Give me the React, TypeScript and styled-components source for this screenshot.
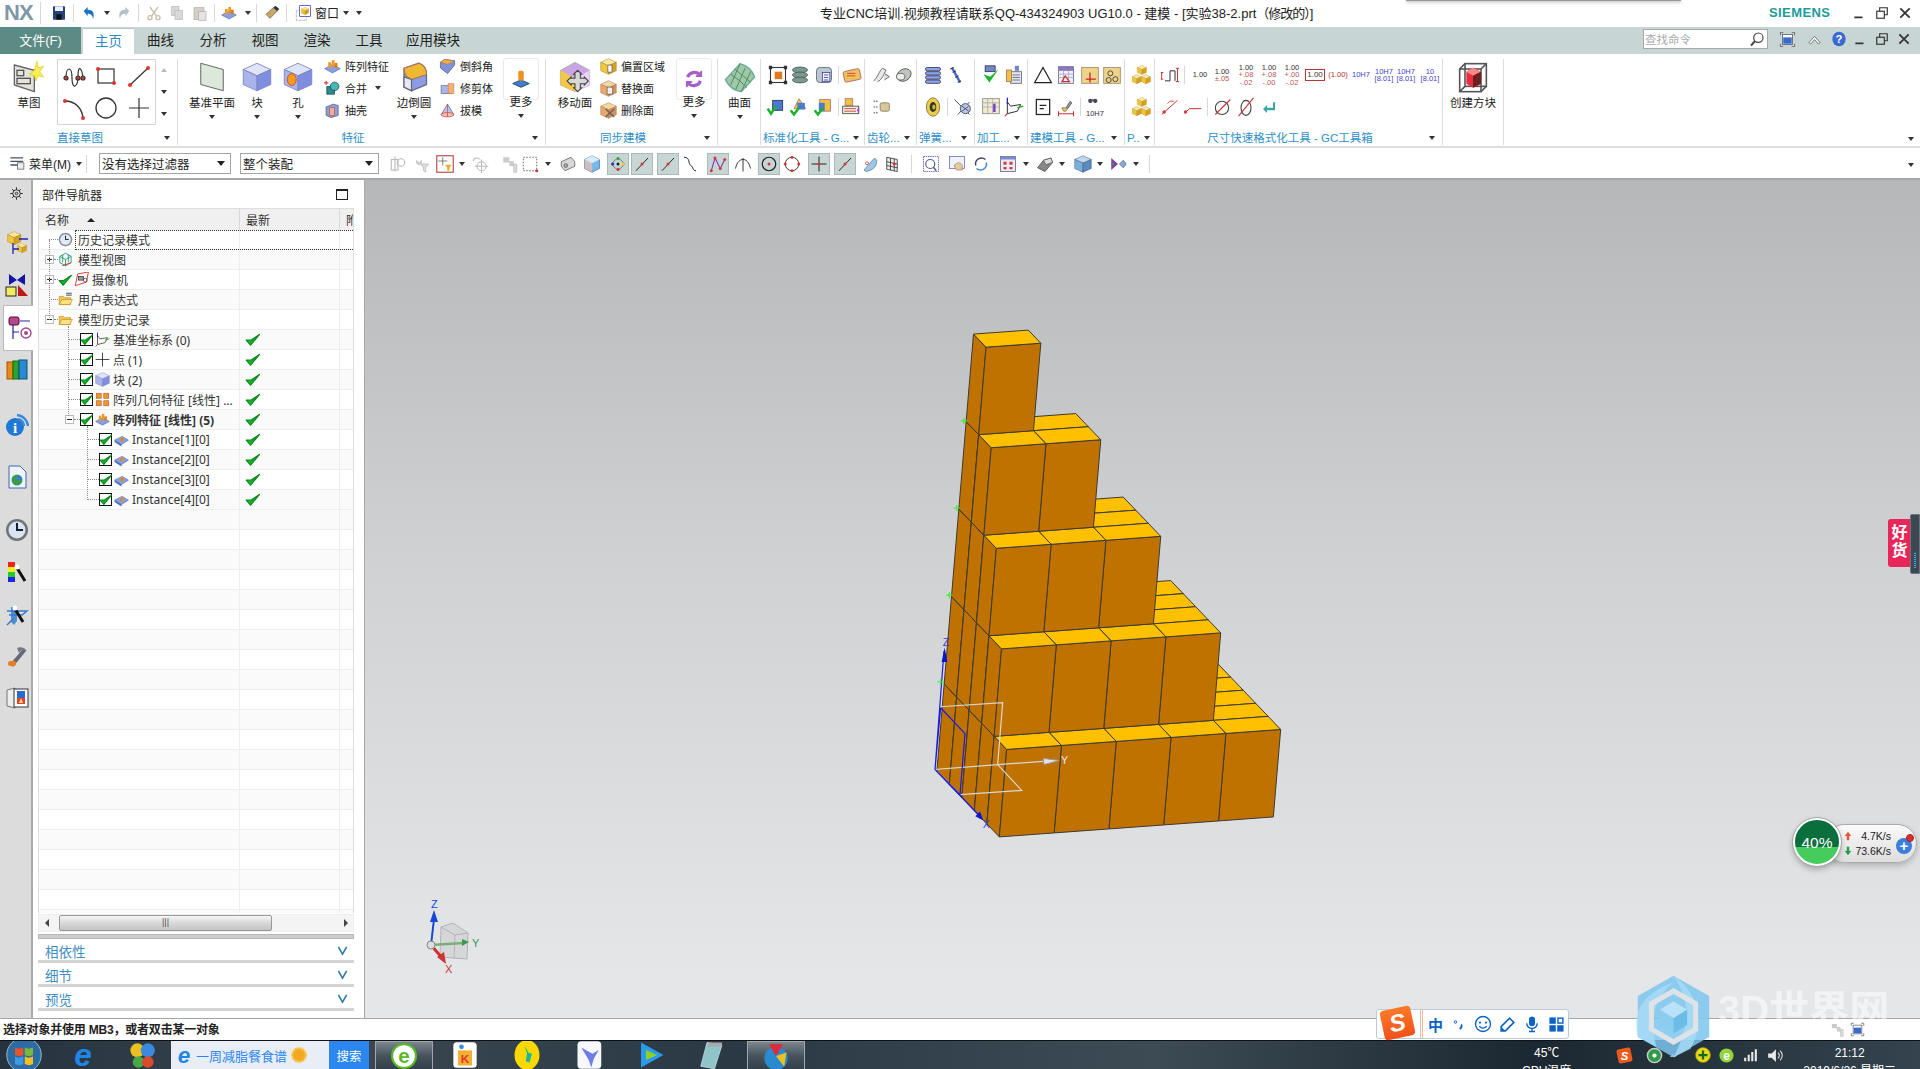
import React from "react";
import styled, { createGlobalStyle } from "styled-components";

const Global = createGlobalStyle`
  html, body { margin: 0; padding: 0; background: #fff; overflow: hidden; }
  * { box-sizing: border-box; }
  body { font-family: "Noto Sans CJK SC", "Liberation Sans", sans-serif; }
`;
const UI = `"Liberation Sans", "Noto Sans CJK SC", sans-serif`;

const Page = styled.div`position: relative; width: 1920px; height: 1069px; display: flex; flex-direction: column; overflow: hidden; font-family: ${UI}; color: #222;`;
const TitleBar = styled.div`height: 27px; display: flex; align-items: center; position: relative; background: #fff; flex: none; padding-bottom: 2px;`;
const Nx = styled.div`width: 40px; padding-left: 4px; font: bold 22px "Liberation Sans", sans-serif; color: #7f97a6; letter-spacing: -1px;`;
const VSep = styled.div<{ $h?: number; $ml?: number; $mr?: number; $c?: string }>`width: 1px; height: ${p => p.$h ?? 22}px; background: ${p => p.$c ?? "#d8d8d8"}; margin-left: ${p => p.$ml ?? 0}px; margin-right: ${p => p.$mr ?? 0}px; flex: none;`;
const Quick = styled.div`display: flex; align-items: center; flex: none; width: 320px; font-size: 12px;`;
const TitleText = styled.div`margin-left: 460px; font-size: 13px; white-space: nowrap; width: 490px; flex: none;`;
const Tight = styled.span`letter-spacing: -1px;`;
const Siemens = styled.div`margin-left: 459px; font: bold 13px "Liberation Sans", sans-serif; letter-spacing: .4px; color: #1b9c98; flex: none;`;
const WinCtl = styled.div<{ $ml: number }>`display: flex; gap: 9px; margin-left: ${p => p.$ml}px; align-items: center; flex: none;`;
const Shadow = styled.div`position: absolute; left: 1406px; top: 0; width: 275px; height: 1px; background: #999; box-shadow: 0 1px 3px #777;`;

const TabBar = styled.div`height: 27px; background: #c7d6d4; display: flex; align-items: stretch; flex: none; position: relative;`;
const FileTab = styled.div`width: 81px; background: #5c8a84; color: #fff; font-size: 13px; display: flex; align-items: center; justify-content: center; padding-bottom: 3px;`;
const Tab = styled.div<{ $active?: boolean; $w: number }>`width: ${p => p.$w}px; font-size: 13.5px; display: flex; align-items: center; justify-content: center; padding-bottom: 3px;
  ${p => p.$active ? "background:#fff;color:#2a8bc4;margin:1px 0 0 2px;border-top:1px solid #b8c8c6;" : "color:#222;"}`;
const TabRight = styled.div`margin-left: auto; display: flex; align-items: center; padding: 0 6px 3px 0;`;
const SearchBox = styled.div`width: 125px; height: 20px; background: #fff; border: 1px solid #a9a9a9; display: flex; align-items: center; justify-content: space-between; color: #aaa; font-size: 11.5px; padding: 0 2px 0 1px;`;

const Ribbon = styled.div`height: 94px; flex: none; display: flex; padding-top: 5px; border-bottom: 2px solid #dedede; background: #fff; position: relative;`;
const Group = styled.div<{ $w: number }>`width: ${p => p.$w}px; height: 86px; border-right: 1px solid #dcdcdc; display: flex; flex-direction: column; flex: none;`;
const GroupBody = styled.div`height: 72px; display: flex;`;
const GroupLabel = styled.div`height: 14px; display: flex; align-items: center; padding-right: 2px; color: #2f8fc6; font-size: 11.5px; line-height: 14px;`;
const GroupName = styled.span<{ $left?: boolean }>`flex: 1; white-space: nowrap; text-align: ${p => p.$left ? "left" : "center"}; padding-left: ${p => p.$left ? "2px" : 0};`;
const Caret = styled.i<{ $ml?: number; $c?: string }>`display: block; width: 0; height: 0; border: 3px solid transparent; border-top: 4px solid ${p => p.$c ?? "#333"}; border-bottom: 0; margin-left: ${p => p.$ml ?? 0}px; flex: none;`;
const GroupCaret = styled(Caret)`margin: 0 5px 0 4px;`;
const Big = styled.div<{ $w: number; $ml?: number; $box?: boolean }>`width: ${p => p.$w}px; margin-left: ${p => p.$ml ?? 0}px; display: flex; flex-direction: column; align-items: center; font-size: 11.5px; color: #222; flex: none;`;
const BigIcon = styled.div<{ $box?: boolean }>`height: 36px; width: 100%; display: flex; align-items: center; justify-content: center; ${p => p.$box ? "border:1px solid #eaeaea;border-radius:3px;height:42px;margin-bottom:-6px;margin-top:-1px;" : ""}`;
const BigLabel = styled.div`height: 16px; line-height: 16px; white-space: nowrap;`;
const BigCaret = styled.div`height: 12px; display: flex; align-items: center; justify-content: center;`;
const SmallCol = styled.div<{ $w: number; $ml: number }>`width: ${p => p.$w}px; margin: -4px 0 0 ${p => p.$ml}px; flex: none;`;
const SmallRow = styled.div`height: 22px; display: flex; align-items: center; gap: 4px; font-size: 11px; white-space: nowrap;`;
const Gallery = styled.div`width: 99px; height: 66px; margin-left: 5px; border: 1px solid #d4d4d4; display: grid; grid-template-columns: repeat(3, 1fr); grid-template-rows: repeat(2, 1fr); flex: none; place-items: center;`;
const GalScroll = styled.div`margin-left: 4px; height: 66px; display: flex; flex-direction: column; align-items: center; justify-content: space-around; width: 8px;`;
const Up = styled.i`display: block; width: 0; height: 0; border: 3px solid transparent; border-bottom: 4px solid #bbb; border-top: 0;`;
const IconRows = styled.div`display: flex; flex-direction: column;`;
const Strip = styled.div<{ $h: number }>`display: flex; align-items: center; height: ${p => p.$h}px;`;
const Cell = styled.div<{ $w: number; $ml: number; $active?: boolean }>`width: ${p => p.$w}px; margin-left: ${p => p.$ml}px; height: 22px; display: flex; align-items: center; justify-content: center; flex: none;
  ${p => p.$active ? "background:#c7d6d4;border:1px solid #a8bab8;" : ""}`;
const Mini = styled.div<{ $c?: string; $box?: boolean }>`font: 7.5px/7.5px "Liberation Sans", sans-serif; color: ${p => p.$c ?? "#333"}; text-align: center; white-space: pre; ${p => p.$box ? "border:1px solid #b33;padding:1px;font-size:8px;" : ""}`;

const Toolbar = styled.div`height: 32px; flex: none; display: flex; align-items: center; border-bottom: 2px solid #a6a8a9; background: #fff; position: relative; padding-top: 1px;`;
const MenuBtn = styled.div`display: flex; align-items: center; gap: 3px; width: 86px; padding-left: 9px; font-size: 12px; flex: none;`;
const Combo = styled.div<{ $w: number; $ml: number }>`width: ${p => p.$w}px; margin-left: ${p => p.$ml}px; height: 21px; border: 1px solid #a5a5a5; display: flex; align-items: center; justify-content: space-between; padding: 0 5px 0 2px; font-size: 12.5px; flex: none;`;
const ComboCaret = styled.i`display: block; width: 0; height: 0; border: 4px solid transparent; border-top: 5px solid #222; border-bottom: 0;`;
const EndCaret = styled(Caret)`position: absolute; right: 6px; top: 15px;`;
const RibbonEnd = styled(Caret)`position: absolute; right: 6px; top: 83px;`;

const Main = styled.div`flex: 1; display: flex; min-height: 0; position: relative;`;
const Rail = styled.div`width: 33px; background: #dcdcdc; border-right: 2px solid #a9a9a9; display: flex; flex-direction: column; flex: none; align-items: center;`;
const RailItem = styled.div<{ $mt: number; $active?: boolean }>`margin-top: ${p => p.$mt}px; display: flex; align-items: center; justify-content: center; flex: none; width: 100%; padding-left: 2px;
  ${p => p.$active ? "height:46px;background:#fff;margin-left:3px;margin-right:-2px;width:30px;border:1px solid #bbb;border-right:0;" : "height:26px;"}`;
const Panel = styled.div`width: 331px; background: #fff; display: flex; flex-direction: column; padding: 0 9px 7px 5px; flex: none;`;
const PanelHead = styled.div`height: 28px; display: flex; align-items: center; justify-content: space-between; font-size: 12px; padding: 0 7px 0 4px; flex: none;`;
const RestoreBox = styled.i`display: block; width: 12px; height: 11px; border: 1px solid #222; border-top-width: 2px;`;
const TreeBox = styled.div`flex: 1; border: 1px solid #dedede; border-bottom: 0; position: relative; overflow: hidden; min-height: 0; width: 316px;`;
const TreeHead = styled.div`height: 21px; display: flex; background: #f0f0f0; font-size: 12px; color: #333;`;
const HeadCell = styled.div<{ $w: number }>`width: ${p => p.$w}px; border-right: 1px solid #d8d8d8; padding-left: 6px; display: flex; align-items: center; gap: 18px; overflow: hidden; white-space: nowrap; flex: none;`;
const SortUp = styled.i`display: block; width: 0; height: 0; border: 4px solid transparent; border-bottom: 4px solid #222; border-top: 0;`;
const Row = styled.div<{ $alt: boolean }>`height: 20px; display: flex; background: ${p => p.$alt ? "#fafafa" : "#fff"}; border-bottom: 1px solid #eeeeee;`;
const NameCell = styled.div<{ $bold?: boolean }>`width: 201px; border-right: 1px solid #eeeeee; display: flex; align-items: center; font: ${p => p.$bold ? 700 : 400} 12px "Noto Sans", "Noto Sans CJK SC", sans-serif; white-space: nowrap; overflow: hidden; flex: none; color: #333;`;
const NewCell = styled.div`width: 100px; border-right: 1px solid #eeeeee; padding-left: 5px; display: flex; align-items: center; flex: none;`;
const Guide = styled.div<{ $w: number }>`width: ${p => p.$w}px; flex: none; height: 100%;`;
const Stub = styled.i<{ $w: number }>`display: block; width: ${p => p.$w}px; border-top: 1px dotted #8a8a8a; flex: none;`;
const Expander = styled.i<{ $ml: number; $open?: boolean }>`display: block; position: relative; width: 9px; height: 9px; border: 1px solid #bbb; background: #fff; margin-left: ${p => p.$ml}px; flex: none;
  &::before { content: ""; position: absolute; left: 1px; top: 3px; width: 5px; height: 1px; background: #222; }
  ${p => p.$open ? "" : `&::after { content: ""; position: absolute; left: 3px; top: 1px; width: 1px; height: 5px; background: #222; }`}`;
const VGuide = styled.i<{ $l: number; $t: number; $h: number }>`position: absolute; left: ${p => p.$l}px; top: ${p => p.$t}px; height: ${p => p.$h}px; border-left: 1px dotted #8a8a8a;`;
const Focus = styled.i`position: absolute; left: 36px; top: 21px; width: 280px; height: 20px; border: 1px dotted #333; border-right: 0;`;
const ChkBox = styled.span`display: flex; width: 13px; height: 13px; border: 1px solid #111; background: #fff; align-items: center; justify-content: center; flex: none;`;
const RowIcon = styled.span<{ $ml: number }>`margin-left: ${p => p.$ml}px; flex: none;`;
const RowText = styled.span<{ $ml: number }>`margin-left: ${p => p.$ml}px;`;
const HScroll = styled.div`height: 18px; display: flex; align-items: center; background: #f4f4f4; margin: 1px 0 2px; border: 1px solid #eee; width: 316px; flex: none; justify-content: space-between; padding: 0 5px 0 6px; position: relative;`;
const Thumb = styled.div`position: absolute; left: 20px; top: 0; width: 213px; height: 16px; background: linear-gradient(#f6f6f6, #d8d8d8 50%, #c4c4c4); border: 1px solid #999; border-radius: 2px; text-align: center; font: 9px/12px "Liberation Sans", sans-serif; color: #555;`;
const ArrowL = styled.i`display: block; width: 0; height: 0; border: 4px solid transparent; border-right: 4px solid #444; border-left: 0;`;
const ArrowR = styled.i`display: block; width: 0; height: 0; border: 4px solid transparent; border-left: 4px solid #444; border-right: 0;`;
const Splitter = styled.div`height: 5px; width: 316px; background: #cdcdcd; border: 1px solid #b8b8b8; flex: none;`;
const Section = styled.div`height: 24px; width: 316px; border-bottom: 3px solid #d4d4d4; color: #3f8dbf; font-size: 13.5px; display: flex; align-items: center; justify-content: space-between; padding: 2px 6px 0 7px; flex: none;`;

const Viewport = styled.div`flex: 1; position: relative; background: linear-gradient(#b6b7b9 0%, #d0d1d3 45%, #e5e6e8 95%); border-left: 1px solid #a8a8a8; overflow: hidden;`;
const ModelSvg = styled.svg`position: absolute; left: 535px; top: 130px; width: 420px; height: 540px;`;
const TriadSvg = styled.svg`position: absolute; left: 50px; top: 719px; width: 80px; height: 80px;`;
const Status = styled.div`height: 22px; flex: none; background: #fff; border-top: 1px solid #a6a6a6; display: flex; align-items: center; padding: 0 0 2px 3px; font-size: 12px; font-weight: 700; color: #222; letter-spacing: -0.2px;`;
const TaskBar = styled.div`height: 29px; flex: none; background: linear-gradient(90deg, #26333e 0%, #3b4852 18%, #2a3944 38%, #3d4b55 60%, #1c2831 80%, #34434e 100%); border-top: 1px solid #0c1218; display: flex; align-items: center; position: relative; overflow: hidden; color: #fff;`;
const TaskIcon = styled.div<{ $ml: number; $active?: boolean }>`margin-left: ${p => p.$ml}px; height: 29px; flex: none; display: flex; align-items: center; justify-content: center; ${p => p.$active ? "width:58px;background:linear-gradient(#7a858d,#47535c 50%,#333f48);border:1px solid #a0a8ad;border-bottom:0;" : "width:30px;"}`;
const WebSearch = styled.div`margin-left: 14px; width: 198px; height: 29px; background: #e9eef4; display: flex; align-items: center; color: #2f86f0; font-size: 13px; flex: none; padding-left: 3px; gap: 2px;`;
const SearchBtn = styled.div`margin-left: auto; width: 40px; height: 29px; background: #2b87ee; color: #fff; font-size: 12.5px; display: flex; align-items: center; justify-content: center;`;
const TrayInfo = styled.div<{ $ml: number }>`margin-left: ${p => p.$ml}px; flex: none; font-size: 12px; text-align: center; line-height: 18px; padding-top: 3px; height: 29px; white-space: nowrap;`;
const TrayIcon = styled.div<{ $ml: number }>`margin-left: ${p => p.$ml}px; flex: none; display: flex; align-items: center;`;

const Ime = styled.div`position: absolute; left: 1376px; top: 1009px; width: 193px; height: 30px; background: #fff; border: 1px solid #b9cada; border-radius: 3px; display: flex; align-items: center; color: #0b63c5;`;
const ImeLogo = styled.div`width: 31px; height: 30px; margin: -2px 0 0 5px; transform: rotate(-12deg); background: linear-gradient(#ff7a28, #f0511a); border-radius: 4px; color: #fff; font: italic bold 24px/30px "Liberation Sans", sans-serif; text-align: center; flex: none;`;
const ImeBar = styled.i`display: block; width: 3px; height: 28px; border-left: 1px solid #f3b9a0; border-right: 1px solid #f3b9a0; margin: 0 5px 0 7px; flex: none;`;
const ImeCn = styled.span`font-size: 15px; font-weight: 700; width: 18px; flex: none;`;
const ImeCell = styled.span`width: 24.5px; display: flex; justify-content: center; flex: none;`;
const Watermark = styled.div`position: absolute; left: 1631px; top: 974px; width: 280px; height: 85px; display: flex; align-items: center; pointer-events: none;`;
const MarkText = styled.div`font: bold 40px "Liberation Sans", "Noto Sans CJK SC", sans-serif; color: rgba(255,255,255,.55); margin: -20px 0 0 2px; white-space: nowrap; letter-spacing: 0;`;
const TinyIcons = styled.div`position: absolute; left: 1830px; top: 1022px; display: flex; gap: 5px; align-items: center;`;
const Tag = styled.div`position: absolute; left: 1888px; top: 519px; width: 23px; height: 48px; background: #e8265a; border-radius: 3px 0 0 3px; color: #fff; font-weight: 700; font-size: 16px; line-height: 18px; text-align: center; padding-top: 5px;`;
const SideBar = styled.div`position: absolute; left: 1910px; top: 514px; width: 10px; height: 60px; background: #3e4852; border-radius: 2px 0 0 2px; border: 1px solid #6b747c;`;
const SideLed = styled.i`display: block; width: 2px; height: 16px; margin: 38px 0 0 3px; background: repeating-linear-gradient(#38b6f0 0 1px, transparent 1px 2px);`;
const Pill = styled.div`position: absolute; left: 1825px; top: 824px; width: 92px; height: 39px; border-radius: 20px; background: linear-gradient(#fafafa, #dedede); border: 1px solid #aaa; box-shadow: 0 3px 6px rgba(0,0,0,.2); font: 10.5px/15px "Liberation Sans", sans-serif; color: #222; display: flex; flex-direction: column; justify-content: center; padding-left: 17px;`;
const SpeedRow = styled.div`display: flex; align-items: center; justify-content: space-between; width: 48px;`;
const Ball = styled.div`position: absolute; left: 1793px; top: 818px; width: 48px; height: 48px; border-radius: 50%; border: 2px solid #fff; outline: 1px solid #aaa; box-shadow: 0 3px 6px rgba(0,0,0,.3); background: linear-gradient(#0a6f3c 0 62%, #45cc5c 62% 100%); color: #fff; font: 15.5px/46px "Liberation Sans", sans-serif; text-align: center;`;
const Plus = styled.div`position: absolute; left: 1896px; top: 838px; width: 16px; height: 16px; border-radius: 50%; background: #3b7fdc; color: #fff; font: bold 15px/15px "Liberation Sans", sans-serif; text-align: center;`;
const RedDot = styled.i`position: absolute; left: 1906px; top: 834px; width: 8px; height: 8px; border-radius: 50%; background: #d8312c; border: 1px solid #a22;`;

/* ---- drawings ---- */
type SvgP = { s?: number; children: React.ReactNode; vb?: string };
const IcSvg = styled.svg`display: block; flex: none;`;
const Ic = ({ s = 20, children, vb = "0 0 24 24" }: SvgP) => <IcSvg width={s} height={s} viewBox={vb}>{children}</IcSvg>;
const Cube = ({ t, l, r, e = "#7c86c0" }: { t: string; l: string; r: string; e?: string }) => (
  <g stroke={e} strokeWidth=".7"><polygon points="12,1 23,6 12,11 1,6" fill={t} /><polygon points="1,6 12,11 12,23 1,18" fill={l} /><polygon points="12,11 23,6 23,18 12,23" fill={r} /></g>
);
const BlueCube = () => <Cube t="#dfe4f6" l="#a9b4ea" r="#7e8ddd" />;
const Yellow = () => <Cube t="#f8e9a0" l="#f0c73c" r="#d8a020" e="#a88020" />;
const Dot = ({ x, y }: { x: number; y: number }) => <circle cx={x} cy={y} r="2" fill="#d33" />;
const Check = ({ s = 15 }: { s?: number }) => <Ic s={s}><path d="M2 13 L9 21 L23 4 L10 13 Z" fill="#19b32c" stroke="#0a8a1c" strokeWidth="2" strokeLinejoin="round" /></Ic>;
const Pattern = () => <g><polygon points="1,15 12,9 23,15 12,21" fill="#8a9ee0" stroke="#5a6cb0" /><rect x="6" y="6" width="4" height="8" fill="#f09a20" /><rect x="11" y="3" width="4" height="8" fill="#f09a20" /><rect x="15" y="7" width="4" height="7" fill="#e07d10" /></g>;
const Folder = () => <g><path d="M2 7h7l2 2h9v11H2z" fill="#f4c74e" stroke="#b98a18" /><path d="M2 20l4-8h17l-4 8z" fill="#fde083" stroke="#b98a18" /></g>;

const icons: Record<string, React.ReactNode> = {
  sketch: <g><polygon points="1,3 16,7 16,23 1,18" fill="#e4e4dc" stroke="#666" /><rect x="3" y="7" width="5" height="4" fill="none" stroke="#555" /><rect x="3" y="13" width="10" height="4" fill="none" stroke="#555" /><path d="M18 0l1 5 4-1-3 4 3 4-4-1-2 4-1-4-4-1 4-3z" fill="#f7ee50" stroke="#d8c820" strokeWidth=".5" /></g>,
  spline: <g fill="none" stroke="#333" strokeWidth="1.2"><path d="M4 14 C4 2 10 2 10 14 S16 24 16 12 S20 4 21 14" /><Dot x={4} y={14} /><Dot x={21} y={14} /><Dot x={16} y={14} /></g>,
  rect: <g><rect x="4" y="5" width="16" height="14" fill="none" stroke="#333" strokeWidth="1.2" /><Dot x={4} y={5} /><Dot x={20} y={19} /></g>,
  line: <g><path d="M3 21L21 4" stroke="#333" strokeWidth="1.2" /><Dot x={3} y={21} /><Dot x={21} y={4} /></g>,
  arc: <g><path d="M3 5C13 5 20 12 21 22" stroke="#333" fill="none" strokeWidth="1.4" /><Dot x={3} y={5} /><Dot x={21} y={22} /></g>,
  circle: <circle cx="12" cy="12" r="10" fill="none" stroke="#333" strokeWidth="1.3" />,
  plus: <path d="M12 2v20M2 12h20" stroke="#333" strokeWidth="1.2" />,
  datum: <polygon points="3,1 21,6 21,23 3,18" fill="#dbe8da" stroke="#666" strokeWidth=".8" />,
  block: <BlueCube />,
  hole: <g><BlueCube /><ellipse cx="7" cy="14" rx="3.6" ry="4.8" fill="#f09a20" stroke="#c33" strokeWidth=".6" /></g>,
  pattern: <Pattern />,
  unite: <g><rect x="4" y="9" width="11" height="11" fill="#2a8a8a" stroke="#145" /><circle cx="15" cy="9" r="6" fill="#4ab6b0" stroke="#145" /><path d="M3 1v6M0 4h6" stroke="#d22" strokeWidth="1.4" /></g>,
  shell: <g><polygon points="3,7 13,3 20,5 20,19 10,22 3,19" fill="#8c9ee0" stroke="#556" /><rect x="8" y="8" width="7" height="11" fill="#f0b090" stroke="#a55" /></g>,
  blend: <g><path d="M4 5 L16 1 Q22 3 22 10 L22 18 L10 23 L4 20Z" fill="#8b9be6" stroke="#667" /><path d="M4 5 L16 1 Q22 3 22 10 L10 14 Q4 12 4 5" fill="#f0b830" stroke="#a76" /><path d="M4 12 L4 20 L10 23 L10 14 Z" fill="#e8e8f4" stroke="#667" /></g>,
  chamfer: <g><polygon points="2,6 8,2 22,4 22,10 12,22 2,14" fill="#7f90dc" stroke="#556" /><polygon points="2,6 8,2 22,4 12,9" fill="#f0b040" stroke="#a76" /></g>,
  trim: <g><rect x="3" y="8" width="16" height="11" fill="#a9b6ec" stroke="#667" /><rect x="13" y="5" width="8" height="14" fill="#f2b468" stroke="#c66" strokeDasharray="2 1" /></g>,
  draft: <g><polygon points="12,3 21,18 3,18" fill="#b9c4ee" stroke="#557" /><ellipse cx="12" cy="18" rx="9" ry="3" fill="#f5c0b0" stroke="#c44" /><path d="M12 3v18" stroke="#c44" /></g>,
  more1: <g><polygon points="3,17 12,13 21,17 12,21" fill="#3f7fd0" stroke="#246" /><rect x="9" y="3" width="6" height="11" rx="2" fill="#f09020" /></g>,
  move: <g><polygon points="12,1 23,7 23,18 12,23 1,18 1,7" fill="#c9a4e6" stroke="#8a6" strokeWidth=".4" /><polygon points="1,7 12,13 12,23 1,18" fill="#f2c84a" /><polygon points="12,13 23,7 23,18 12,23" fill="#e8d0f6" /><path d="M14 7l3 3-1 0v3h3v-1l3 3-3 3v-1h-3v3h1l-3 3-3-3h1v-3H9v1l-3-3 3-3v1h3v-3h-1z" fill="#d8d8d8" stroke="#444" strokeWidth=".8" /></g>,
  offset: <g><Yellow /><path d="M11 10h6v10h-6z" fill="#fff" stroke="#555" /></g>,
  replace: <g><Cube t="#f5d8a0" l="#e8a868" r="#d89050" e="#a76" /><rect x="10" y="10" width="8" height="10" fill="#eee" stroke="#555" /></g>,
  del: <g><Cube t="#f5d8a0" l="#e8a868" r="#d89050" e="#a76" /><path d="M8 10l12 11M20 10L8 21" stroke="#666" strokeWidth="2" /></g>,
  sync: <g fill="none" stroke="#a65fc8" strokeWidth="3.5"><path d="M5 10a8 8 0 0 1 13-3" /><path d="M19 14a8 8 0 0 1-13 3" /><path d="M20 3v6h-6M4 21v-6h6" strokeWidth="1.6" fill="#a65fc8" /></g>,
  surface: <g><path d="M1 14 L12 2 Q20 4 23 12 L13 23 Q5 22 1 14Z" fill="#9ec8a6" stroke="#6a9" /><path d="M5 10Q12 14 17 20M8 6Q14 11 20 16M12 2L5 18M16 5L9 21M20 8L13 23" stroke="#4f8a60" strokeWidth=".7" fill="none" /></g>,
  csys: <g fill="none" stroke="#333"><path d="M4 6v14l12-3 4-8-12 2z" strokeWidth="1.2" /><path d="M4 20L1 23" stroke="#c33" strokeWidth="1.5" /><path d="M4 8V1" stroke="#22a" strokeWidth="1.5" /><path d="M16 13l7-2" stroke="#2a2" strokeWidth="1.5" /></g>,
  std1: <g><rect x="3" y="3" width="18" height="18" fill="none" stroke="#333" strokeWidth="1.3" /><rect x="8" y="8" width="9" height="9" fill="#e07820" /><path d="M1 1h4v4H1zM19 1h4v4h-4zM1 19h4v4H1zM19 19h4v4h-4z" fill="#333" /></g>,
  std2: <g fill="#7a9a8a" stroke="#456"><ellipse cx="12" cy="6" rx="9" ry="3.5" /><ellipse cx="12" cy="12" rx="9" ry="3.5" /><ellipse cx="12" cy="18" rx="9" ry="3.5" /></g>,
  std3: <g><rect x="3" y="3" width="18" height="18" rx="4" fill="#bbc8cc" stroke="#567" /><rect x="10" y="9" width="9" height="11" fill="#e8f0f8" stroke="#44a" /><path d="M12 12h5M12 15h5M12 18h5" stroke="#448" /></g>,
  std4: <g><rect x="2" y="6" width="20" height="13" rx="2" fill="#f0c060" stroke="#a66" transform="rotate(-12 12 12)" /><path d="M6 10h10M6 13h10" stroke="#c33" /></g>,
  ok1: <g><rect x="8" y="4" width="12" height="12" fill="#4a7ad0" stroke="#235" /><path d="M2 14l4 6 6-9" stroke="#19b32c" strokeWidth="3" fill="none" /></g>,
  ok2: <g><polygon points="6,14 12,2 20,14" fill="#f0c040" stroke="#a76" /><rect x="10" y="7" width="9" height="8" fill="#4a7ad0" /><path d="M2 16l4 5 6-8" stroke="#19b32c" strokeWidth="3" fill="none" /></g>,
  ok3: <g><rect x="8" y="3" width="13" height="14" fill="#f0c040" stroke="#a76" /><rect x="7" y="7" width="7" height="10" fill="#4a7ad0" /><path d="M2 16l4 5 6-8" stroke="#19b32c" strokeWidth="3" fill="none" /></g>,
  tbl: <g><rect x="5" y="2" width="9" height="8" fill="#f0c040" stroke="#a76" /><rect x="2" y="11" width="19" height="9" fill="#f4f0e0" stroke="#444" /><path d="M4 14h14M4 17h14" stroke="#b33" /><path d="M22 11v9l-3-4z" fill="#a040c0" /></g>,
  gear1: <g fill="none" stroke="#555"><path d="M3 19C8 16 10 6 14 4 L18 6 C16 10 13 18 8 20" fill="#e8e8e8" /><path d="M16 10l6 4-6 4" fill="#ddd" /></g>,
  gear2: <g><ellipse cx="12" cy="12" rx="9" ry="7" fill="#c0c4c0" stroke="#555" transform="rotate(-30 12 12)" /><ellipse cx="8" cy="14" rx="5" ry="4" fill="#eee" stroke="#555" /></g>,
  gear3: <g><path d="M3 5h6M3 12h6M3 19h6" stroke="#333" strokeDasharray="2 1" /><rect x="11" y="7" width="11" height="10" rx="2" fill="#d8c8a0" stroke="#875" /></g>,
  spring1: <g fill="#8fa4e6" stroke="#335"><rect x="3" y="3" width="18" height="4" rx="2" /><rect x="3" y="8" width="18" height="4" rx="2" /><rect x="3" y="13" width="18" height="4" rx="2" /><rect x="3" y="18" width="18" height="4" rx="2" /></g>,
  spring2: <g stroke="#4a66c8" strokeWidth="3" fill="none"><path d="M7 3L17 21" /><path d="M5 5L9 3M8 9l4-2M11 15l4-2M14 21l4-2" stroke="#223" strokeWidth="1" /></g>,
  spring3: <g><ellipse cx="12" cy="12" rx="8" ry="11" fill="#e8d040" stroke="#765" /><ellipse cx="12" cy="12" rx="4" ry="6" fill="#333" /><ellipse cx="13" cy="12" rx="2" ry="3" fill="#d8b030" /></g>,
  spring4: <g stroke="#556" fill="none" strokeWidth="1.2"><path d="M3 3l18 18M21 6L7 21" /><ellipse cx="16" cy="14" rx="6" ry="6" fill="#b8c8e8" /><path d="M12 11l8 6M12 17l8-6" /></g>,
  mach1: <g><rect x="5" y="1" width="12" height="7" fill="#7088c8" stroke="#335" /><path d="M3 11l7 10L21 5l-10 9z" fill="#19b32c" /></g>,
  mach2: <g><rect x="8" y="8" width="13" height="14" fill="#dde4ec" stroke="#667" /><path d="M10 12h9M10 15h9M10 18h9" stroke="#667" /><rect x="3" y="6" width="6" height="14" fill="#f0c040" stroke="#a76" /><rect x="13" y="1" width="5" height="6" fill="#7088c8" /></g>,
  mach3: <g><rect x="2" y="2" width="20" height="18" fill="#f0ecd0" stroke="#888" /><path d="M2 7h20M2 12h20M8 2v18M14 2v18" stroke="#aaa" /><path d="M16 8v10" stroke="#74c" strokeWidth="3" /></g>,
  tri: <path d="M12 3L22 21H2Z" fill="none" stroke="#222" strokeWidth="1.5" />,
  calc: <g><rect x="3" y="2" width="18" height="20" fill="#eef" stroke="#668" /><rect x="3" y="2" width="18" height="5" fill="#8878c0" /><path d="M3 11h18M3 15h18M9 7v15M15 7v15" stroke="#aab" /><path d="M11 13l5 7h-9z" fill="none" stroke="#c33" strokeWidth="1.5" /></g>,
  fold1: <g><rect x="2" y="3" width="20" height="19" fill="#ecd48a" stroke="#a86" /><path d="M7 17h12M12 9v12" stroke="#c22" strokeWidth="1.6" /></g>,
  fold2: <g><rect x="2" y="3" width="20" height="19" fill="#ecd48a" stroke="#a86" /><circle cx="10" cy="10" r="3" fill="none" stroke="#333" /><circle cx="16" cy="17" r="3" fill="none" stroke="#333" /><circle cx="8" cy="18" r="3" fill="none" stroke="#333" /></g>,
  note: <g fill="none" stroke="#222" strokeWidth="1.5"><rect x="4" y="3" width="16" height="18" /><path d="M8 10h8M8 14h5" /></g>,
  brush: <g><path d="M3 20h18M3 17v6M21 17v6" stroke="#c33" strokeWidth="1.3" /><path d="M12 13l5-8 2 2-5 7z" fill="#999" stroke="#555" /><path d="M7 13h7l-2 4H9z" fill="#e8c860" stroke="#875" /></g>,
  bino: <g><circle cx="8" cy="7" r="4" fill="#445" /><circle cx="17" cy="7" r="4" fill="#445" /><rect x="10" y="4" width="5" height="4" fill="#667" /></g>,
  boxes: <g><g transform="translate(7 0) scale(.5)"><Yellow /></g><g transform="translate(1 11) scale(.5)"><Yellow /></g><g transform="translate(12 11) scale(.5)"><Yellow /></g></g>,
  dim1: <g fill="none" stroke="#c33" strokeWidth="1.2"><path d="M2 9v8M1 9h3M1 17h3M21 4v16M19 4h4M19 20h4" /><path d="M6 19h6V7h6v12" stroke="#333" /></g>,
  rz: <g><path d="M2 21L21 4" stroke="#c33" strokeWidth="1.2" /><Dot x={5} y={18} /><path d="M9 8l3-3h5" stroke="#c33" fill="none" /></g>,
  rz2: <g><path d="M2 19l6-5h14" stroke="#c33" fill="none" strokeWidth="1.2" /><Dot x={3} y={18} /></g>,
  dia1: <g fill="none" stroke="#444" strokeWidth="1.3"><circle cx="12" cy="13" r="8" /><path d="M4 21L22 3" stroke="#c33" /></g>,
  dia2: <g fill="none" stroke="#444" strokeWidth="1.3"><ellipse cx="12" cy="13" rx="6" ry="9" /><path d="M3 23L21 1" stroke="#c33" /></g>,
  back: <path d="M18 5v8H9V9l-6 6 6 6v-4h12V5z" fill="#3aa6a8" transform="scale(.8) translate(3 3)" />,
  newblock: <g><rect x="6" y="2" width="16" height="17" fill="none" stroke="#555" strokeWidth="1.2" /><rect x="2" y="6" width="16" height="17" fill="none" stroke="#555" strokeWidth="1.2" /><path d="M2 6l4-4M18 6l4-4M18 23l4-4M2 23l4-4" stroke="#555" strokeWidth="1.2" /><polygon points="12,5 18,8 18,17 12,20 7,17 7,8" fill="#e62e3e" /><polygon points="12,5 18,8 12,11 7,8" fill="#f88" /><polygon points="12,11 18,8 18,17 12,20" fill="#6e2020" /></g>,
  fmenu: <g><path d="M2 4h18M2 9h18M2 14h12" stroke="#456" strokeWidth="2" /><rect x="12" y="11" width="9" height="9" fill="#eee" stroke="#555" /></g>,
  f1: <g fill="none" stroke="#bbb" strokeWidth="1.5"><rect x="3" y="6" width="9" height="14" /><circle cx="16" cy="10" r="5" /><path d="M8 2v20" /></g>,
  f2: <g><path d="M4 6l4 4 4-4v5l-4 3-4-3z" fill="#ccc" /><path d="M10 12h11l-4 5v6l-3-2v-4z" fill="#ddd" stroke="#bbb" /></g>,
  f3: <g><rect x="1" y="1" width="22" height="22" fill="#fff" stroke="#b44" strokeWidth="1.5" /><path d="M9 3v11M3 8h12" stroke="#555" /><path d="M12 13h9l-3 4v4h-3v-4z" fill="#e8b030" /></g>,
  f4: <g fill="none" stroke="#bbb" strokeWidth="1.5"><circle cx="14" cy="15" r="6" /><path d="M14 6v18M5 15h18M3 8c1-5 7-5 9-2" /></g>,
  f5: <g><path d="M3 3h8v7H3zM11 8h6v7h-6z" fill="#ccc" /><path d="M17 12h4v11h-4z" fill="#ddd" stroke="#bbb" /></g>,
  f6: <g><rect x="3" y="3" width="18" height="18" fill="none" stroke="#333" strokeDasharray="2 2" /><circle cx="21" cy="21" r="2" fill="#d33" /></g>,
  f7: <g><polygon points="3,9 16,3 21,9 21,15 8,21 3,15" fill="#d8d8d8" stroke="#555" /><circle cx="9" cy="14" r="2.5" fill="#aaa" stroke="#555" /></g>,
  f8: <g><polygon points="12,1 22,6 22,18 12,23 2,18 2,6" fill="#7ab8e8" stroke="#57a" /><polygon points="12,1 22,6 12,11 2,6" fill="#d8ecf8" /><polygon points="2,6 12,11 12,23 2,18" fill="#f0c0b0" opacity=".7" /></g>,
  sn1: <g><path d="M12 3l9 9-9 9-9-9z" fill="none" stroke="#456" /><circle cx="12" cy="5" r="2" fill="#3a3" /><circle cx="19" cy="12" r="2" fill="#fc0" /><circle cx="12" cy="19" r="2" fill="#d33" /><circle cx="5" cy="12" r="2" fill="#33a" /><circle cx="12" cy="12" r="2" fill="#222" /></g>,
  sn2: <g><path d="M4 21L20 4" stroke="#222" strokeWidth="1.3" /><Dot x={12} y={12} /></g>,
  sn3: <path d="M4 3c9 0 5 9 9 11s2 7 7 7" fill="none" stroke="#222" strokeWidth="1.3" />,
  sn4: <g><path d="M3 21L8 4l7 14 6-12" fill="none" stroke="#7a3ab0" strokeWidth="1.4" /><Dot x={8} y={4} /><Dot x={3} y={21} /><Dot x={15} y={18} /><Dot x={21} y={6} /></g>,
  sn5: <path d="M12 4v18M2 18C4 9 8 6 12 6s8 3 10 12" fill="none" stroke="#333" strokeWidth="1.3" />,
  sn6: <g><circle cx="12" cy="12" r="9" fill="none" stroke="#222" strokeWidth="1.6" /><Dot x={12} y={12} /></g>,
  sn7: <g><circle cx="12" cy="12" r="9" fill="none" stroke="#333" strokeWidth="1.3" /><Dot x={3} y={12} /><Dot x={21} y={12} /><Dot x={12} y={3} /><Dot x={12} y={21} /></g>,
  sn8: <g><path d="M12 2v20M2 12h20" stroke="#111" strokeWidth="1.2" /><Dot x={12} y={12} /></g>,
  sn9: <g><path d="M4 20L18 4l3 3c0 8-4 13-14 15z" fill="#9cc8e8" stroke="#678" /><circle cx="8" cy="11" r="2" fill="#fff" stroke="#d33" /></g>,
  sn10: <g><path d="M5 3l14 3v16L5 19z" fill="#eee" stroke="#222" /><path d="M5 9l14 3M5 14l14 3M10 4v16M15 5v16" stroke="#222" /><Dot x={15} y={12} /></g>,
  v1: <g><rect x="2" y="2" width="20" height="20" fill="#fff" stroke="#44b" strokeDasharray="2 1" /><circle cx="11" cy="12" r="6" fill="none" stroke="#567" strokeWidth="1.6" /><path d="M15 16l4 5" stroke="#567" strokeWidth="2" /></g>,
  v2: <g><rect x="2" y="2" width="20" height="16" fill="#eef2fa" stroke="#66a" /><path d="M12 11c2-2 6 0 7 3v6h-8l-3-6z" fill="#e8c8a0" stroke="#a86" /></g>,
  v3: <g fill="none" stroke="#446" strokeWidth="2"><path d="M5 14a8 8 0 0 1 13-8" /><path d="M19 10a8 8 0 0 1-13 8" stroke="#48c" /></g>,
  v4: <g><rect x="2" y="2" width="20" height="20" fill="#e8ecf8" stroke="#557" /><rect x="2" y="2" width="20" height="4" fill="#7d8ad0" /><rect x="6" y="9" width="4" height="4" fill="#d33" /><rect x="14" y="9" width="4" height="4" fill="#d33" /><rect x="6" y="16" width="4" height="3" fill="#d33" /><rect x="14" y="16" width="4" height="3" fill="#d33" /></g>,
  v5: <g><polygon points="2,17 10,7 20,4 22,10 12,22" fill="#888" stroke="#444" /><polygon points="10,7 20,4 22,10 13,13" fill="#ddd" stroke="#555" /></g>,
  v6: <Cube t="#bcd8f0" l="#7ab0dc" r="#5a8cc0" e="#457" />,
  v7: <g><path d="M3 4l9 8-9 8z" fill="#8a3ab0" /><path d="M3 12h4" stroke="#2a2" strokeWidth="3" /><path d="M14 12l5-5 4 5-4 5z" fill="#8aa8d8" stroke="#568" /></g>,
  clock: <g><circle cx="12" cy="12" r="11" fill="#8a8f96" /><circle cx="12" cy="12" r="8.5" fill="#dfeaf6" /><path d="M12 6v6h5" stroke="#222" strokeWidth="1.6" fill="none" /></g>,
  mview: <g fill="none" stroke="#1c9a6a" strokeWidth="1.4"><polygon points="12,2 21,7 21,17 12,22 3,17 3,7" /><path d="M3 7l9 5 9-5M12 12v10M7.5 4.5v12M16.5 4.5v12" /><path d="M7 22l14-5" stroke="#d33" strokeWidth="1.6" /></g>,
  camera: <g><path d="M2 22l4-19 17-3-3 16z" fill="#fff" stroke="#d33" strokeWidth="1.5" /><rect x="7" y="7" width="8" height="6" fill="#999" stroke="#222" /><circle cx="18" cy="13" r="3" fill="none" stroke="#222" /></g>,
  exprF: <g><Folder /><path d="M13 2h9M13 5h9" stroke="#335" strokeWidth="1.4" /></g>,
  folder: <Folder />,
  point: <path d="M12 1v22M1 12h22" stroke="#222" strokeWidth="1.3" />,
  geo: <g fill="#ee9a1a" stroke="#a55"><rect x="2" y="2" width="8" height="8" /><rect x="14" y="2" width="8" height="8" /><rect x="2" y="14" width="8" height="8" /><rect x="14" y="14" width="8" height="8" /></g>,
  inst: <g><polygon points="1,13 13,7 23,13 12,20" fill="#86a4e0" stroke="#4a6ab0" /><polygon points="1,13 12,20 12,23 1,16" fill="#4a6ab0" /><rect x="10" y="9" width="5" height="6" fill="#f08020" /></g>,
  gearI: <g fill="none" stroke="#333" strokeWidth="1.6"><circle cx="12" cy="12" r="6" /><circle cx="12" cy="12" r="2" /><path d="M12 2v4M12 18v4M2 12h4M18 12h4M5 5l3 3M16 16l3 3M19 5l-3 3M8 16l-3 3" /></g>,
  r1: <g><g transform="translate(2 0) scale(.6)"><Yellow /></g><g transform="translate(12 12) scale(.42)"><Yellow /></g><path d="M8 12v11M8 18h6M14 8h9" stroke="#22a" strokeWidth="1.3" /></g>,
  r2: <g><path d="M4 1l8 6 8-6v11l-8-5-8 5z" fill="#1414a8" /><rect x="1" y="14" width="10" height="9" fill="#f4ec60" stroke="#222" /><path d="M13 23V12l10 11z" fill="#c31414" /></g>,
  r3: <g><rect x="1" y="1" width="10" height="8" rx="2" fill="#b04a90" stroke="#602" /><path d="M5 9v14M5 16h6M12 5h10" stroke="#22a" strokeWidth="1.2" /><circle cx="18" cy="17" r="5" fill="#fff" stroke="#a04a90" strokeWidth="1.4" /><circle cx="18" cy="17" r="2" fill="#a04a90" /></g>,
  r4: <g><rect x="2" y="5" width="6" height="17" fill="#e88a1a" stroke="#a50" /><rect x="8" y="4" width="6" height="18" fill="#30a030" stroke="#070" /><rect x="14" y="3" width="8" height="19" fill="#2a8ad0" stroke="#057" /></g>,
  r5: <g><circle cx="10" cy="14" r="9" fill="#1e78d4" /><text x="10" y="20" fontSize="15" fontWeight="700" fill="#fff" textAnchor="middle" fontFamily="Liberation Serif">i</text><path d="M12 2a12 12 0 0 1 11 11M13 6a8 8 0 0 1 6 7" stroke="#3a8adc" strokeWidth="2.4" fill="none" /></g>,
  r6: <g><path d="M4 1h11l6 6v16H4z" fill="#eef4fa" stroke="#3a68b0" /><circle cx="12" cy="15" r="5.5" fill="#3a9a50" /><path d="M12 10a5 5 0 0 1 5 5h-5z" fill="#3a7ad0" /></g>,
  r7: <g><circle cx="12" cy="12" r="11" fill="#707478" /><circle cx="12" cy="12" r="8.5" fill="#d8e4f2" /><path d="M12 5v7h6" stroke="#123" strokeWidth="2" fill="none" /></g>,
  r8: <g><rect x="3" y="2" width="7" height="5" fill="#e22" /><rect x="3" y="7" width="7" height="5" fill="#ee2" /><rect x="3" y="12" width="7" height="5" fill="#2c2" /><rect x="3" y="17" width="7" height="5" fill="#22e" /><path d="M12 8l8 13" stroke="#111" strokeWidth="3" /><circle cx="12" cy="7" r="2.5" fill="#fff" /></g>,
  r9: <g><path d="M6 4v15l3 3 3-4V4z" fill="#4a90d0" /><path d="M2 8h20l-5 4H4M2 22l6-6" stroke="#3a78c8" strokeWidth="1.5" fill="none" /><path d="M10 6l8 13" stroke="#111" strokeWidth="3" /><circle cx="10" cy="5" r="2.5" fill="#fff" /></g>,
  r10: <g><path d="M5 19L18 4l3 2L8 22z" fill="#667" /><path d="M12 3c4-2 8 0 10 3l-5-1-3 3z" fill="#778" /><rect x="3" y="16" width="8" height="5" rx="2" fill="#e88020" /></g>,
  r11: <g><path d="M2 4l8-2v20l-8-2z" fill="#eee" stroke="#777" /><rect x="9" y="3" width="14" height="18" fill="#fff" stroke="#333" /><rect x="12" y="5" width="8" height="7" fill="#2a6ad0" /><rect x="12" y="12" width="8" height="6" fill="#e84020" /><path d="M14 17h4l-2-5z" fill="#ffe0a0" /></g>,
  save: <g><rect x="3" y="2" width="18" height="20" rx="1" fill="#24437c" /><rect x="6" y="2" width="12" height="7" fill="#eef" /><rect x="8" y="14" width="8" height="8" fill="#111" /></g>,
  undo: <path d="M4 9l6-6v4c8 0 11 5 8 14-1-6-3-8-8-8v4z" fill="#1f72c8" />,
  redo: <path d="M20 9l-6-6v4C6 7 3 12 6 21c1-6 3-8 8-8v4z" fill="#b4c2ce" />,
  cut: <g stroke="#c8c0a8" strokeWidth="2" fill="none"><path d="M6 3l10 14M18 3L8 17" /><circle cx="6" cy="19" r="3" /><circle cx="18" cy="19" r="3" /></g>,
  copy: <g fill="#d8d8d8" stroke="#b8b8b8"><rect x="4" y="2" width="11" height="14" /><rect x="9" y="8" width="11" height="14" /></g>,
  paste: <g fill="#d4d0c4" stroke="#aaa"><rect x="3" y="4" width="15" height="18" /><rect x="10" y="10" width="11" height="13" fill="#e4e4e4" /></g>,
  pen: <g><path d="M3 14l11-10 6 5L9 20z" fill="#c8a860" stroke="#554" /><path d="M14 4l6 5 3-3-6-5z" fill="#334" /></g>,
  win: <g><rect x="2" y="8" width="15" height="15" fill="#fff" stroke="#667" strokeDasharray="1 1" /><rect x="7" y="1" width="16" height="16" fill="#fff" stroke="#22c" /><g transform="translate(9 3) scale(.5)"><Cube t="#fbe69a" l="#f0c040" r="#d89a20" e="#a80" /></g></g>,
  lens: <g fill="none" stroke="#444" strokeWidth="1.8"><circle cx="14" cy="10" r="7" /><path d="M9 15l-6 7" strokeWidth="3" /></g>,
  frame: <g><path d="M2 6V2h4M18 2h4v4M22 18v4h-4M6 22H2v-4" fill="none" stroke="#777" strokeWidth="1.5" /><rect x="5" y="5" width="14" height="14" fill="#fff" stroke="#446" /><rect x="6" y="9" width="12" height="9" fill="#3a6ac8" /></g>,
  chev: <path d="M3 17l9-10 9 10-3 2-6-7-6 7z" fill="#fff" stroke="#333" />,
  help: <g><ellipse cx="12" cy="12" rx="10" ry="11" fill="#3a6ad0" /><text x="12" y="18" fontSize="17" fontWeight="700" fill="#fff" textAnchor="middle" fontFamily="Liberation Sans">?</text></g>,
  min: <rect x="4" y="18" width="14" height="3" fill="#333" />,
  rest: <g fill="none" stroke="#333" strokeWidth="2"><rect x="3" y="9" width="13" height="12" /><path d="M8 9V3h13v12h-5" /></g>,
  close: <path d="M4 4l16 16M20 4L4 20" stroke="#333" strokeWidth="3" />,
  chevD: <path d="M3 4l9 16 9-16" fill="none" stroke="#3478a8" strokeWidth="3.5" />,
};
const G = ({ n, s = 20 }: { n: string; s?: number }) => <Ic s={s}>{icons[n]}</Ic>;

const Line = ({ xs, from, w = 22, size = 20 }: { xs: [string | React.ReactNode, number, boolean?][]; from: number; w?: number; size?: number }) => {
  let end = from;
  return <>{xs.map(([n, c, a], i) => {
    const isCaret = n === "^"; const isSep = n === "|";
    const cw = isCaret ? 10 : isSep ? 1 : w;
    const ml = c - cw / 2 - end; end = c + cw / 2;
    return <Cell key={i} $w={cw} $ml={Math.round(ml)} $active={a}>
      {isCaret ? <Caret /> : isSep ? <VSep $h={18} /> : typeof n === "string" ? <G n={n} s={size} /> : n}
    </Cell>;
  })}</>;
};

const BigTool = ({ n, label, w, ml, s = 30, caret = true, box }: { n: string; label: string; w: number; ml?: number; s?: number; caret?: boolean; box?: boolean }) => (
  <Big $w={w} $ml={ml}><BigIcon $box={box}><G n={n} s={s} /></BigIcon><BigLabel>{label}</BigLabel>{caret && <BigCaret><Caret /></BigCaret>}</Big>
);
const Small = ({ n, t, c }: { n: string; t: string; c?: boolean }) => <SmallRow><G n={n} s={17} /><span>{t}</span>{c && <Caret $ml={4} />}</SmallRow>;
const Lbl = ({ t, left }: { t: string; left?: boolean }) => <GroupLabel><GroupName $left={left}>{t}</GroupName><GroupCaret /></GroupLabel>;

type TreeRow = { t: string; bold?: boolean; ok?: boolean; pad: number; exp?: boolean | "open"; chk?: boolean; tick?: boolean; icon: string; stub: number; gap: number; iml?: number };
const rows: TreeRow[] = [
  { t: "历史记录模式", pad: 10, stub: 9, icon: "clock", gap: 5 },
  { t: "模型视图", pad: 6, exp: true, stub: 4, icon: "mview", gap: 5 },
  { t: "摄像机", pad: 6, exp: true, stub: 4, tick: true, icon: "camera", gap: 3, iml: 2 },
  { t: "用户表达式", pad: 10, stub: 9, icon: "exprF", gap: 5 },
  { t: "模型历史记录", pad: 6, exp: "open", stub: 4, icon: "folder", gap: 5 },
  { t: "基准坐标系 (0)", ok: true, chk: true, pad: 29, stub: 12, icon: "csys", gap: 3, iml: 2 },
  { t: "点 (1)", ok: true, chk: true, pad: 29, stub: 12, icon: "point", gap: 3, iml: 2 },
  { t: "块 (2)", ok: true, chk: true, pad: 29, stub: 12, icon: "block", gap: 3, iml: 2 },
  { t: "阵列几何特征 [线性] ...", ok: true, chk: true, pad: 29, stub: 12, icon: "geo", gap: 3, iml: 2 },
  { t: "阵列特征 [线性] (5)", bold: true, ok: true, chk: true, pad: 26, exp: "open", stub: 6, icon: "pattern", gap: 3, iml: 2 },
  { t: "Instance[1][0]", ok: true, chk: true, pad: 48, stub: 12, icon: "inst", gap: 3, iml: 2 },
  { t: "Instance[2][0]", ok: true, chk: true, pad: 48, stub: 12, icon: "inst", gap: 3, iml: 2 },
  { t: "Instance[3][0]", ok: true, chk: true, pad: 48, stub: 12, icon: "inst", gap: 3, iml: 2 },
  { t: "Instance[4][0]", ok: true, chk: true, pad: 48, stub: 12, icon: "inst", gap: 3, iml: 2 },
];
const blanks = Array.from({ length: 21 }, (_, i) => i);

const railCenters: [string, number, boolean?][] = [["gearI", 193], ["r1", 243], ["r2", 285], ["r3", 328, true], ["r4", 369], ["r5", 425], ["r6", 477], ["r7", 530], ["r8", 572], ["r9", 615], ["r10", 657], ["r11", 698]];

/* the stepped solid: cube rows seen from front-left */
const U = [164.4, -11.6], D = [-37.5, -38], V = [22, -254], O = [298, 1530];
const P = (i: number, j: number, k: number) => `${O[0] + i * U[0] + j * D[0] + k * V[0]},${O[1] + i * U[1] + j * D[1] + k * V[1]}`;
const faces: { p: string; f: string; key: string }[] = [];
for (let k = 0; k < 5; k++) for (let j = 4; j >= k; j--) for (let i = 4 - k; i >= 0; i--) {
  faces.push({ key: `l${i}${j}${k}`, f: "#bf7200", p: [P(i, j, k), P(i, j + 1, k), P(i, j + 1, k + 1), P(i, j, k + 1)].join(" ") });
  faces.push({ key: `f${i}${j}${k}`, f: "#bf7200", p: [P(i, j, k), P(i + 1, j, k), P(i + 1, j, k + 1), P(i, j, k + 1)].join(" ") });
  faces.push({ key: `t${i}${j}${k}`, f: "#ffc000", p: [P(i, j, k + 1), P(i + 1, j, k + 1), P(i + 1, j + 1, k + 1), P(i, j + 1, k + 1)].join(" ") });
}
const thin = { vectorEffect: "non-scaling-stroke" as const };

const Model = () => (
  <ModelSvg viewBox="0 0 1260 1568" preserveAspectRatio="none">
    {faces.map(x => <polygon key={x.key} points={x.p} fill={x.f} stroke="#3d3a34" strokeWidth="1" {...thin} />)}
    <g fill="none" stroke="#d8d8d8" strokeWidth="1.2">
      <polyline points="120,1152 308,1140 293,1320 365,1395 180,1407 105,1334 293,1320" {...thin} />
      <path d="M293 1320L440 1310" {...thin} />
    </g>
    <polygon points="430,1302 478,1308 432,1320" fill="#e4e4e4" stroke="#999" {...thin} />
    <text x="483" y="1318" fontSize="32" fill="#e8e8e8" fontFamily="Liberation Sans">Y</text>
    <g fill="none" stroke="#1a1ae0" strokeWidth="1.2">
      <path d="M122 1155L105 1334L240 1470M122 1155L195 1230L180 1407L105 1334M105 1334L132 990" {...thin} />
    </g>
    <polygon points="134,980 142,1022 125,1022" fill="#0a14c8" />
    <polygon points="250,1482 226,1470 240,1456" fill="#0a14c8" />
    <text x="128" y="975" fontSize="32" fill="#3a3ae0" fontFamily="Liberation Sans">Z</text>
    <text x="248" y="1505" fontSize="32" fill="#3a3ae0" fontFamily="Liberation Sans">X</text>
    <g stroke="#3cf03c" strokeWidth="1.2">
      {[[192, 322], [170, 575], [148, 828], [122, 1080]].map(([x, y]) => <path key={x} d={`M${x - 9} ${y}h18M${x} ${y - 9}v18`} {...thin} />)}
    </g>
  </ModelSvg>
);

const Triad = () => (
  <TriadSvg viewBox="0 0 80 80">
    <g fill="rgba(190,190,190,.35)" stroke="#b4b4b4"><polygon points="26,28 38,24 53,34 52,60 25,58" /><path d="M26 28l14 8 13-2M40 36l-1 24" fill="none" /></g>
    <path d="M16 46L19 20" stroke="#1448d8" strokeWidth="2" /><polygon points="19,11 23,23 15,23" fill="#1448d8" />
    <path d="M16 46L48 44" stroke="#79b079" strokeWidth="2.4" /><polygon points="54,43 47,40 47,47" fill="#3a9a50" />
    <path d="M16 46L28 60" stroke="#c33" strokeWidth="3" /><polygon points="31,65 22,58 29,53" fill="#c33" />
    <circle cx="16" cy="46" r="4" fill="#ddd" stroke="#888" />
    <text x="16" y="9" fontSize="11" fill="#1448d8" fontFamily="Liberation Sans">Z</text>
    <text x="57" y="48" fontSize="11" fill="#3a9a50" fontFamily="Liberation Sans">Y</text>
    <text x="30" y="74" fontSize="11" fill="#c33" fontFamily="Liberation Sans">X</text>
  </TriadSvg>
);

const Orb = () => <Ic s={36}><circle cx="12" cy="12" r="11.5" fill="#2d6ca2" stroke="#9cc" strokeWidth=".6" /><path d="M6 7c2 1 3 1 5.5 0v5c-2 1-3 1-5.5 0z" fill="#e8522a" /><path d="M12.5 7c2 1 3 1 5.5 0v5c-2 1-3 1-5.5 0z" fill="#7ab83a" /><path d="M6 13c2 1 3 1 5.5 0v5c-2 1-3 1-5.5 0z" fill="#3a9ae8" /><path d="M12.5 13c2 1 3 1 5.5 0v5c-2 1-3 1-5.5 0z" fill="#f4c020" /></Ic>;
const Ie = ({ s = 28, c = "#1d86e8" }: { s?: number; c?: string }) => <Ic s={s}><text x="12" y="21" fontSize="27" fontWeight="700" fontStyle="italic" fill={c} textAnchor="middle" fontFamily="Liberation Sans">e</text></Ic>;

export default function App() {
  let prevBottom = 180;
  return (
    <Page>
      <Global />
      <TitleBar>
        <Nx>NX</Nx>
        <Quick>
          <VSep />
          <Line size={16} from={41} xs={[["save", 59], ["|", 73], ["undo", 88], ["^", 106], ["redo", 123], ["|", 137], ["cut", 152], ["copy", 175], ["paste", 198], ["|", 212], ["pattern", 226], ["^", 245], ["|", 253], ["pen", 268], ["|", 282], ["win", 298]]} />
          <Cell $w={26} $ml={0}><span>窗口</span></Cell>
          <Caret $ml={3} /><Caret $ml={7} />
        </Quick>
        <TitleText>专业CNC培训.视频教程请联系QQ-434324903 UG10.0 - 建模 - [实验38-2.prt<Tight>（修改的）]</Tight></TitleText>
        <Siemens>SIEMENS</Siemens>
        <WinCtl $ml={22}><G n="min" s={14} /><G n="rest" s={14} /><G n="close" s={14} /></WinCtl>
        <Shadow />
      </TitleBar>
      <TabBar>
        <FileTab>文件(F)</FileTab>
        <Tab $active $w={51}>主页</Tab>
        <Tab $w={53}>曲线</Tab><Tab $w={52}>分析</Tab><Tab $w={52}>视图</Tab><Tab $w={52}>渲染</Tab><Tab $w={52}>工具</Tab><Tab $w={76}>应用模块</Tab>
        <TabRight>
          <SearchBox>查找命令<G n="lens" s={16} /></SearchBox>
          <Cell $w={20} $ml={9}><G n="frame" s={17} /></Cell>
          <Cell $w={20} $ml={7}><G n="chev" s={15} /></Cell>
          <Cell $w={20} $ml={5}><G n="help" s={16} /></Cell>
          <Cell $w={20} $ml={1}><G n="min" s={14} /></Cell>
          <Cell $w={20} $ml={2}><G n="rest" s={14} /></Cell>
          <Cell $w={20} $ml={2}><G n="close" s={14} /></Cell>
        </TabRight>
      </TabBar>
      <Ribbon>
        <Group $w={178}>
          <GroupBody>
            <BigTool n="sketch" label="草图" w={46} ml={6} s={32} caret={false} />
            <Gallery>
              {["spline", "rect", "line", "arc", "circle", "plus"].map(n => <G key={n} n={n} s={24} />)}
            </Gallery>
            <GalScroll><Up /><Caret /><Caret /></GalScroll>
          </GroupBody>
          <Lbl t="直接草图" />
        </Group>
        <Group $w={368}>
          <GroupBody>
            <BigTool n="datum" label="基准平面" w={48} ml={10} />
            <BigTool n="block" label="块" w={42} />
            <BigTool n="hole" label="孔" w={40} />
            <SmallCol $w={67} $ml={6}>
              <Small n="pattern" t="阵列特征" /><Small n="unite" t="合并" c /><Small n="shell" t="抽壳" />
            </SmallCol>
            <BigTool n="blend" label="边倒圆" w={44} ml={1} />
            <SmallCol $w={64} $ml={3}>
              <Small n="chamfer" t="倒斜角" /><Small n="trim" t="修剪体" /><Small n="draft" t="拔模" />
            </SmallCol>
            <BigTool n="more1" label="更多" w={36} s={22} box />
          </GroupBody>
          <Lbl t="特征" />
        </Group>
        <Group $w={172}>
          <GroupBody>
            <BigTool n="move" label="移动面" w={44} ml={7} s={32} caret={false} />
            <SmallCol $w={76} $ml={3}>
              <Small n="offset" t="偏置区域" /><Small n="replace" t="替换面" /><Small n="del" t="删除面" />
            </SmallCol>
            <BigTool n="sync" label="更多" w={36} s={22} box />
          </GroupBody>
          <Lbl t="同步建模" />
        </Group>
        <Group $w={43}>
          <GroupBody><BigTool n="surface" label="曲面" w={43} s={32} /></GroupBody>
        </Group>
        <Group $w={104}>
          <GroupBody><IconRows>
            <Strip $h={32}><Line from={0} xs={[["std1", 17], ["std2", 39], ["std3", 63], ["|", 77], ["std4", 90]]} /></Strip>
            <Strip $h={32}><Line from={0} xs={[["ok1", 15], ["ok2", 38], ["ok3", 62], ["|", 77], ["tbl", 89]]} /></Strip>
          </IconRows></GroupBody>
          <Lbl t="标准化工具 - G..." left />
        </Group>
        <Group $w={52}>
          <GroupBody><IconRows>
            <Strip $h={32}><Line from={0} xs={[["gear1", 16], ["gear2", 39]]} /></Strip>
            <Strip $h={32}><Line from={0} xs={[["gear3", 16]]} /></Strip>
          </IconRows></GroupBody>
          <Lbl t="齿轮..." left />
        </Group>
        <Group $w={58}>
          <GroupBody><IconRows>
            <Strip $h={32}><Line from={0} xs={[["spring1", 16], ["spring2", 39]]} /></Strip>
            <Strip $h={32}><Line from={0} xs={[["spring3", 16], ["|", 30], ["spring4", 44]]} /></Strip>
          </IconRows></GroupBody>
          <Lbl t="弹簧..." left />
        </Group>
        <Group $w={53}>
          <GroupBody><IconRows>
            <Strip $h={32}><Line from={0} xs={[["mach1", 16], ["mach2", 39]]} /></Strip>
            <Strip $h={32}><Line from={0} xs={[["mach3", 16], ["csys", 39]]} /></Strip>
          </IconRows></GroupBody>
          <Lbl t="加工..." left />
        </Group>
        <Group $w={97}>
          <GroupBody><IconRows>
            <Strip $h={32}><Line from={0} xs={[["tri", 15], ["calc", 38], ["fold1", 62], ["fold2", 84]]} /></Strip>
            <Strip $h={32}><Line from={0} xs={[["note", 15], ["brush", 38], ["|", 52], [<Mini key="b"><G n="bino" s={13} />10H7</Mini>, 66]]} /></Strip>
          </IconRows></GroupBody>
          <Lbl t="建模工具 - G..." left />
        </Group>
        <Group $w={30}>
          <GroupBody><IconRows>
            <Strip $h={32}><Line from={0} xs={[["boxes", 16]]} /></Strip>
            <Strip $h={32}><Line from={0} xs={[["boxes", 16]]} /></Strip>
          </IconRows></GroupBody>
          <Lbl t="P.." left />
        </Group>
        <Group $w={288}>
          <GroupBody><IconRows>
            <Strip $h={32}><Line from={0} xs={[
              ["dim1", 15], ["|", 29],
              [<Mini key="a">1.00</Mini>, 44],
              [<Mini key="c">{"1.00\n"}<Mini $c="#b55">±.05</Mini></Mini>, 66],
              [<Mini key="d">{"1.00\n"}<Mini $c="#b55">{"+.08\n-.02"}</Mini></Mini>, 90],
              [<Mini key="e">{"1.00\n"}<Mini $c="#b55">{"+.08\n-.00"}</Mini></Mini>, 113],
              [<Mini key="f">{"1.00\n"}<Mini $c="#b55">{"+.00\n-.02"}</Mini></Mini>, 136],
              [<Mini key="g" $box>1.00</Mini>, 159],
              [<Mini key="h" $c="#a33">(1.00)</Mini>, 182],
              [<Mini key="i" $c="#44c">10H7</Mini>, 205],
              [<Mini key="j" $c="#44c">{"10H7\n[8.01]"}</Mini>, 228],
              [<Mini key="k" $c="#44c">{"10H7\n[8.01]"}</Mini>, 250],
              [<Mini key="l" $c="#44c">{"10\n[8.01]"}</Mini>, 274],
            ]} /></Strip>
            <Strip $h={32}><Line from={0} xs={[["rz", 15], ["rz2", 38], ["|", 52], ["dia1", 66], ["dia2", 90], ["back", 113]]} /></Strip>
          </IconRows></GroupBody>
          <Lbl t="尺寸快速格式化工具 - GC工具箱" />
        </Group>
        <Group $w={61}>
          <GroupBody><BigTool n="newblock" label="创建方块" w={60} s={32} caret={false} /></GroupBody>
        </Group>
        <RibbonEnd />
      </Ribbon>
      <Toolbar>
        <MenuBtn><G n="fmenu" s={17} />菜单(M)<Caret $ml={2} /></MenuBtn>
        <VSep $ml={0} $h={18} />
        <Combo $w={132} $ml={12}>没有选择过滤器<ComboCaret /></Combo>
        <Combo $w={139} $ml={9}>整个装配<ComboCaret /></Combo>
        <Line size={18} from={379} xs={[
          ["f1", 398], ["f2", 422], ["f3", 445], ["^", 462], ["f4", 480], ["f5", 510], ["f6", 530], ["^", 548], ["f7", 568], ["f8", 592],
          ["sn1", 618, true], ["sn2", 642, true], ["sn2", 668, true], ["sn3", 690], ["sn4", 718, true], ["sn5", 743], ["sn6", 769, true], ["sn7", 792], ["sn8", 819, true], ["sn2", 845, true], ["sn9", 870], ["sn10", 892], ["|", 911],
          ["v1", 930], ["v2", 956], ["v3", 980], ["v4", 1007], ["^", 1025], ["v5", 1044], ["^", 1061], ["v6", 1082], ["^", 1099], ["v7", 1117], ["^", 1135], ["|", 1148],
        ]} />
        <EndCaret />
      </Toolbar>
      <Main>
        <Rail>
          {railCenters.map(([n, c, a]) => {
            const h = a ? 46 : 26;
            const top = c - h / 2;
            const mt = Math.round(top - prevBottom);
            prevBottom = top + h;
            return <RailItem key={n} $mt={mt} $active={a}><G n={n} s={n === "gearI" ? 15 : 24} /></RailItem>;
          })}
        </Rail>
        <Panel>
          <PanelHead>部件导航器<RestoreBox /></PanelHead>
          <TreeBox>
            <TreeHead>
              <HeadCell $w={201}>名称<SortUp /></HeadCell>
              <HeadCell $w={100}>最新</HeadCell>
              <HeadCell $w={14}>附</HeadCell>
            </TreeHead>
            {rows.map((r, i) => (
              <Row key={r.t} $alt={i % 2 === 1}>
                <NameCell $bold={r.bold}>
                  {r.exp ? <Expander $ml={r.pad} $open={r.exp === "open"} /> : <Guide $w={r.pad} />}
                  <Stub $w={r.stub} />
                  {r.tick && <Check s={14} />}
                  {r.chk && <ChkBox><Check s={13} /></ChkBox>}
                  <RowIcon $ml={r.iml ?? 0}><G n={r.icon} s={15} /></RowIcon>
                  <RowText $ml={r.gap}>{r.t}</RowText>
                </NameCell>
                <NewCell>{r.ok && <Check />}</NewCell>
              </Row>
            ))}
            {blanks.map(i => (
              <Row key={i} $alt={i % 2 === 0}><NameCell /><NewCell /></Row>
            ))}
            <VGuide $l={10} $t={31} $h={80} />
            <VGuide $l={29} $t={117} $h={90} />
            <VGuide $l={48} $t={217} $h={74} />
            <Focus />
          </TreeBox>
          <HScroll><ArrowL /><Thumb>|||</Thumb><ArrowR /></HScroll>
          <Splitter />
          <Section>相依性<G n="chevD" s={11} /></Section>
          <Section>细节<G n="chevD" s={11} /></Section>
          <Section>预览<G n="chevD" s={11} /></Section>
        </Panel>
        <Viewport>
          <Model />
          <Triad />
        </Viewport>
      </Main>
      <Status>选择对象并使用 MB3，或者双击某一对象</Status>
      <TaskBar>
        <TaskIcon $ml={9}><Orb /></TaskIcon>
        <TaskIcon $ml={29}><Ie /></TaskIcon>
        <TaskIcon $ml={29}><Ic s={28}><circle cx="8" cy="8" r="6" fill="#e8c020" /><circle cx="17" cy="8" r="6" fill="#3a8ae0" /><circle cx="9" cy="18" r="5" fill="#48a848" /><circle cx="17" cy="18" r="5" fill="#d84a2a" /></Ic></TaskIcon>
        <WebSearch><Ie s={20} />一周减脂餐食谱<Ic s={20}><circle cx="12" cy="12" r="8" fill="#f4a820" stroke="#f8c040" strokeWidth="3" strokeDasharray="2 1" /></Ic><SearchBtn>搜索</SearchBtn></WebSearch>
        <TaskIcon $ml={6} $active><Ic s={26}><circle cx="12" cy="12" r="11" fill="#fff" stroke="#5ab82a" strokeWidth="2" /><text x="12" y="18" fontSize="19" fontWeight="700" fill="#5ab82a" textAnchor="middle" fontFamily="Liberation Sans">e</text></Ic></TaskIcon>
        <TaskIcon $ml={17}><Ic s={28}><rect x="2" y="1" width="20" height="22" rx="3" fill="#fff" /><rect x="6" y="8" width="12" height="13" fill="#f4b030" /><text x="12" y="19" fontSize="10" fontWeight="700" fill="#d33" textAnchor="middle" fontFamily="Liberation Sans">K</text><circle cx="9" cy="5" r="2" fill="#3a8ae0" /></Ic></TaskIcon>
        <TaskIcon $ml={32}><Ic s={30}><ellipse cx="12" cy="12" rx="10" ry="12" fill="#fbd800" /><path d="M10 4l3 6 3 1-2 7-3-1 1-6z" fill="#18b89a" /></Ic></TaskIcon>
        <TaskIcon $ml={33}><Ic s={30}><rect x="2" y="1" width="19" height="22" rx="3" fill="#f6f8fc" /><path d="M5 6l9 5 5-3-4 7-2 7-2-6z" fill="#6e7ee8" /></Ic></TaskIcon>
        <TaskIcon $ml={31}><Ic s={30}><path d="M4 2l18 10L4 22z" fill="#2a9aec" /><path d="M8 8l9 4-9 4z" fill="#8ed020" /></Ic></TaskIcon>
        <TaskIcon $ml={31}><Ic s={30}><polygon points="8,2 20,4 14,23 3,21" fill="#8fc4c8" stroke="#cde" strokeWidth=".6" /><path d="M9 2h11v3H9z" fill="#aaa" /></Ic></TaskIcon>
        <TaskIcon $ml={20} $active><Ic s={28}><circle cx="12" cy="14" r="10" fill="#2a8ad0" /><path d="M6 2h12l-6 10z" fill="#e02838" /><path d="M12 12l9-3-2 12z" fill="#f0c020" /></Ic></TaskIcon>
        <TrayInfo $ml={717}>45℃<br />CPU温度</TrayInfo>
        <TrayIcon $ml={45}><Ic s={17}><rect x="2" y="2" width="20" height="20" rx="3" fill="#ef5a1c" transform="rotate(-12 12 12)" /><text x="12" y="18" fontSize="16" fontWeight="700" fontStyle="italic" fill="#fff" textAnchor="middle" fontFamily="Liberation Sans">S</text></Ic></TrayIcon>
        <TrayIcon $ml={13}><Ic s={17}><circle cx="12" cy="12" r="10" fill="#2f9a4a" stroke="#ccc" strokeWidth="2" /><circle cx="12" cy="12" r="3" fill="#fff" /></Ic></TrayIcon>
        <TrayIcon $ml={7}><Up /></TrayIcon>
        <TrayIcon $ml={18}><Ic s={18}><circle cx="12" cy="12" r="10" fill="#e8d818" stroke="#7a8a18" /><path d="M12 6v12M6 12h12" stroke="#186a18" strokeWidth="3" /></Ic></TrayIcon>
        <TrayIcon $ml={6}><Ic s={17}><circle cx="12" cy="12" r="10" fill="#8fd63a" /><text x="12" y="18" fontSize="17" fontWeight="700" fill="#fff" textAnchor="middle" fontFamily="Liberation Sans">e</text></Ic></TrayIcon>
        <TrayIcon $ml={7}><Ic s={17}><path d="M3 20h3v-5H3zM8 20h3V11H8zM13 20h3V7h-3zM18 20h3V3h-3z" fill="#e8e8e8" /></Ic></TrayIcon>
        <TrayIcon $ml={7}><Ic s={17}><path d="M3 9h5l6-6v18l-6-6H3z" fill="#e8e8e8" /><path d="M17 8a6 6 0 0 1 0 8M20 5a10 10 0 0 1 0 14" stroke="#e8e8e8" strokeWidth="1.5" fill="none" /></Ic></TrayIcon>
        <TrayInfo $ml={20}>21:12<br />2019/6/26 星期二</TrayInfo>
      </TaskBar>

      <Watermark>
        <Ic s={85} vb="0 0 100 100">
          <polygon points="50,2 92,26 92,74 50,98 8,74 8,26" fill="#7cc6ee" opacity=".85" />
          <path d="M50 2C75 20 90 50 70 88L50 98C70 60 70 30 50 2ZM8 74C0 40 20 20 50 10C30 25 20 50 30 86Z" fill="#a9dcf6" opacity=".8" />
          <polygon points="50,20 76,35 76,65 50,80 24,65 24,35" fill="none" stroke="#dfe3e6" strokeWidth="6" />
          <polygon points="50,32 66,42 50,52 34,42" fill="#b9e2f8" />
          <polygon points="34,42 50,52 50,70 34,60" fill="#8ccdef" />
          <polygon points="66,42 50,52 50,70 66,60" fill="#6cbce8" />
        </Ic>
        <MarkText>3D世界网</MarkText>
      </Watermark>
      <TinyIcons><G n="f5" s={15} /><G n="frame" s={15} /></TinyIcons>
      <Ime>
        <ImeLogo>S</ImeLogo><ImeBar />
        <ImeCn>中</ImeCn>
        <ImeCell><Ic s={15}><circle cx="7" cy="8" r="2" fill="none" stroke="#0b63c5" strokeWidth="1.5" /><path d="M16 12c2 1 1 5-2 7" stroke="#0b63c5" strokeWidth="3" fill="none" /></Ic></ImeCell>
        <ImeCell><Ic s={18}><circle cx="12" cy="12" r="10" fill="none" stroke="#0b63c5" strokeWidth="1.8" /><circle cx="8" cy="10" r="1.5" fill="#0b63c5" /><circle cx="16" cy="10" r="1.5" fill="#0b63c5" /><path d="M7 15c3 3 7 3 10 0" stroke="#0b63c5" strokeWidth="1.6" fill="none" /></Ic></ImeCell>
        <ImeCell><Ic s={17}><path d="M3 15L15 3l6 6L9 21H3z" fill="none" stroke="#0b63c5" strokeWidth="2.2" /><path d="M3 15l6 6-6 0z" fill="#0b63c5" /></Ic></ImeCell>
        <ImeCell><Ic s={18}><rect x="8" y="2" width="8" height="13" rx="4" fill="#0b63c5" /><path d="M5 11a7 7 0 0 0 14 0M12 18v4M8 22h8" stroke="#0b63c5" strokeWidth="1.8" fill="none" /></Ic></ImeCell>
        <ImeCell><Ic s={17}><rect x="2" y="2" width="9" height="9" fill="#0b63c5" /><rect x="14" y="3" width="7" height="7" fill="none" stroke="#0b63c5" strokeWidth="2" /><rect x="2" y="13" width="9" height="9" fill="#0b63c5" /><rect x="13" y="13" width="9" height="9" fill="#0b63c5" /></Ic></ImeCell>
      </Ime>
      <Tag>好<br />货</Tag>
      <SideBar><SideLed /></SideBar>
      <Pill>
        <SpeedRow><Ic s={10}><path d="M12 2l8 10h-5v10H9V12H4z" fill="#e0583a" /></Ic>4.7K/s</SpeedRow>
        <SpeedRow><Ic s={10}><path d="M12 22L4 12h5V2h6v10h5z" fill="#2a9a50" /></Ic>73.6K/s</SpeedRow>
      </Pill>
      <Ball>40%</Ball>
      <Plus>+</Plus>
      <RedDot />
    </Page>
  );
}
